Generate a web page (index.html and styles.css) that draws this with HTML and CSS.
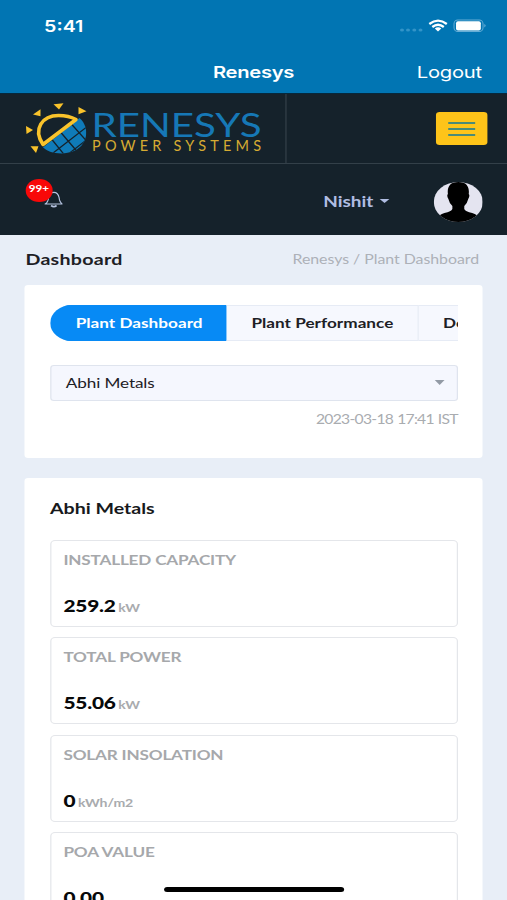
FILE: index.html
```html
<!DOCTYPE html>
<html lang="en">
<head>
<meta charset="utf-8">
<meta name="viewport" content="width=device-width, initial-scale=1">
<title>Renesys</title>
<link rel="stylesheet" href="styles.css">
</head>
<body>
<div class="screen">
  <header class="app-bar">
    <div class="status">
      <span class="clock">5:41</span>
      <svg class="status-icons" viewBox="398 16 90 20" preserveAspectRatio="none">
        <g fill="#3394c8"><ellipse cx="402" cy="30" rx="2" ry="1.6"/><ellipse cx="408" cy="30" rx="2" ry="1.6"/><ellipse cx="414.3" cy="30" rx="2" ry="1.6"/><ellipse cx="420.5" cy="30" rx="2" ry="1.6"/></g>
        <g fill="none" stroke="#fff" stroke-width="2.3"><path d="M429.3 24Q438 17.2 446.800 24"/><path d="M432.300 27Q438 22.400 443.800 27"/></g>
        <path fill="#fff" d="M434.800 28.500Q438 26 441.300 28.500L438 31.500Z"/>
        <rect x="454" y="20" width="29" height="11.500" rx="3.800" fill="none" stroke="#67aed6"/>
        <rect x="456" y="21.200" width="24.800" height="9.200" rx="2" fill="#fff"/>
        <path d="M484.300 24Q487 25.700 484.300 27.500Z" fill="#67aed6"/>
      </svg>
    </div>
    <div class="nav"><span></span><span class="nav-title">Renesys</span><span class="logout">Logout</span></div>
  </header>

  <div class="brand-row">
    <div class="brand">
      <svg class="logo" viewBox="24 100 240 56" preserveAspectRatio="none">
        <g fill="#f9c32b">
          <path d="M53 104.300L63 103.300L58.500 109.500Z"/><path d="M32.500 114.500L40 109.300V116.300Z"/><path d="M78 107L86 111.300L78 114.300Z"/><path d="M25.500 126L32.500 130L26 134Z"/><path d="M30 146.300H38L35.500 153Z"/>
        </g>
        <clipPath id="globe"><path d="M42.500 147.500L79 118C91 128 88 153 61 153.500C52 153.500 46 150.500 42.500 147.500Z"/></clipPath>
        <g clip-path="url(#globe)">
          <rect x="40" y="115" width="50" height="40" fill="#0f7bb9"/>
          <path d="M50 155L90 124M64 157L91 136M60 132L77 152M70 123L87 142M51 139L64 155" fill="none" stroke="#15222b" stroke-width="1.300"/>
        </g>
        <path d="M42.500 144.500C32 129 42 115.500 58 115.500C65 115.500 71 117 75.500 119.500Z" fill="none" stroke="#f9c32b" stroke-width="3.600" stroke-linejoin="round"/>
        <text class="logo-name" x="91" y="137.300" textLength="170" lengthAdjust="spacingAndGlyphs">RENESYS</text>
        <text class="logo-sub" x="91.500" y="150.800" textLength="169" lengthAdjust="spacing">POWER SYSTEMS</text>
      </svg>
    </div>
    <button class="menu" aria-label="Menu"><i></i><i></i><i></i></button>
  </div>

  <div class="user-row">
    <div class="bell-wrap">
      <svg class="bell" viewBox="44 190 19 18" preserveAspectRatio="none" fill="none" stroke="#b5c3e0" stroke-width="1.200">
        <path d="M45 204Q48 202.500 48.500 197.500Q49.500 192.300 53.800 192.300Q58 192.300 59 197.500Q59.500 202.500 62.500 204Z" stroke-linejoin="round"/><path d="M51 205.500Q53.800 207.800 56.500 205.500" stroke-width="1.800"/>
      </svg>
      <span class="badge">99+</span>
    </div>
    <span class="user">Nishit</span><i class="caret"></i>
    <svg class="avatar" viewBox="433 182 50 40" preserveAspectRatio="none">
      <clipPath id="face"><ellipse cx="458" cy="202" rx="24.700" ry="20"/></clipPath>
      <g clip-path="url(#face)"><rect x="433" y="182" width="50" height="40" fill="#e4e4f0"/>
      <path d="M458 182C450 181.500 446.500 187 447.500 194Q446 195.500 448 199Q449 203.500 452 206V209Q451 211.500 444 213Q438.500 214.500 436 219V223H480V219Q477.500 214.500 472 213Q465 211.500 464 209V206Q467 203.500 468 199Q470 195.500 468.500 194C469.500 187 466 181.500 458 182Z"/></g>
    </svg>
  </div>

  <main>
    <div class="page-head"><h1>Dashboard</h1><span class="crumbs">Renesys / Plant Dashboard</span></div>

    <section class="card filter">
      <nav class="tabs"><a class="tab active">Plant Dashboard</a><a class="tab performance">Plant Performance</a><a class="tab">Devices</a></nav>
      <div class="select"><span>Abhi Metals</span><i class="arrow"></i></div>
      <div class="time">2023-03-18 17:41 IST</div>
    </section>

    <section class="card plant">
      <h2>Abhi Metals</h2>
      <div class="metrics">
        <article class="metric"><h3>INSTALLED CAPACITY</h3><p><b>259.2</b><span>kW</span></p></article>
        <article class="metric"><h3>TOTAL POWER</h3><p><b>55.06</b><span>kW</span></p></article>
        <article class="metric"><h3>SOLAR INSOLATION</h3><p><b class="zero">0</b><span>kWh/m2</span></p></article>
        <article class="metric"><h3>POA VALUE</h3><p><b>0.00</b></p></article>
      </div>
    </section>
  </main>
  <div class="home-indicator"></div>
</div>
</body>
</html>
```
FILE: styles.css
```css
* { box-sizing: border-box; }
html, body { margin: 0; width: 507px; height: 900px; overflow: hidden; }
h1, h2, h3, p { margin: 0; }

/* 414px wide phone layout, widened to fill the window */
.screen {
  position: relative;
  width: 414px;
  height: 900px;
  overflow: hidden;
  transform: scaleX(1.22464);
  transform-origin: 0 0;
  background: #e8eef7;
  color: #1d2025;
  font-family: Lato, "Liberation Sans", sans-serif;
}

.app-bar { height: 94px; background: #0175b3; border-bottom: 1px solid #06283c; color: #fff; font-family: Inter, sans-serif; }
.status { display: flex; justify-content: space-between; height: 50px; padding: 16px 15.500px 0 36px; }
.clock { font-size: 16px; line-height: 20px; font-weight: 600; }
.status-icons { width: 73.500px; height: 20px; }
.nav { display: grid; grid-template-columns: 1fr auto 1fr; height: 43px; align-items: center; padding: 0 20.500px; }
.nav-title { font-size: 16.500px; font-weight: 600; letter-spacing: -.25px; }
.logout { font-size: 16.500px; letter-spacing: -.2px; text-align: right; }

.brand-row { display: flex; align-items: center; justify-content: space-between; height: 70px; padding-right: 16px; background: #15222b; border-bottom: 1px solid #334049; }
.brand { display: flex; align-items: center; width: 233.500px; height: 100%; padding-left: 19.600px; border-right: 1px solid #334049; }
.logo { width: 196px; height: 56px; margin-top: -1px; }
.logo-name { font-size: 33px; font-weight: 400; fill: #1678b6; }
.logo-sub { font-size: 14.500px; font-weight: 400; fill: #d6ab32; }
.menu { display: flex; flex-direction: column; align-items: center; justify-content: center; gap: 4px; width: 42.500px; height: 33px; border: 0; border-radius: 3px; background: #fec419; padding: 0; }
.menu i { width: 22px; height: 2px; background: #4a8b78; }

.user-row { display: flex; align-items: center; height: 71px; padding: 0 19.600px 1px 20.800px; background: #15222b; color: #b0bde2; }
.bell-wrap { position: relative; flex: 1; height: 71px; padding: 26px 0 0 15px; }
.bell { width: 15.500px; height: 18px; }
.badge { position: absolute; left: 0; top: 15.500px; width: 22px; height: 22.500px; border-radius: 50%; background: #f80808; color: #fff; font: 700 9.500px/20px Lato, sans-serif; text-align: center; }
.user { margin-top: 3px; font-size: 15.500px; font-weight: 700; line-height: 20px; }
.caret { width: 0; border: 4px solid transparent; border-top-color: #b0bde2; border-bottom: 0; margin: 4px 36px 0 5px; }
.avatar { width: 40.500px; height: 40px; margin-top: 5px; }

main { padding: 0 19.800px 0 20.400px; }
.page-head { display: flex; align-items: center; justify-content: space-between; height: 50px; padding: 0 3px 2px 0; }
h1 { margin-top: -1px; padding-left: .4px; font-size: 16px; font-weight: 700; letter-spacing: .22px; }
.crumbs { font-size: 13px; color: #adb1b8; letter-spacing: -.04px; }

.card { background: #fff; border-radius: 3px; padding: 20px 20.400px; }
.filter { height: 173px; margin-bottom: 19.500px; }
.tabs { display: flex; height: 36px; overflow: hidden; font-size: 14px; font-weight: 700; white-space: nowrap; border-radius: 18px 0 0 18px; }
.tab { flex: none; padding: 0 20px; line-height: 33px; border: 1px solid #e6ebf5; border-left: 0; background: #f6f8fe; letter-spacing: .02px; }
.tab.active { width: 144.500px; padding: 0 0 0 21px; background: #078af5; border-color: #078af5; color: #fff; }
.performance { width: 156.500px; padding-right: 0; }
.select { display: flex; align-items: center; justify-content: space-between; height: 36px; margin-top: 24px; padding: 0 10px 1px 12px; background: #f5f7fe; border: 1px solid #dfe4ee; border-radius: 3px; font-size: 14px; letter-spacing: -.1px; }
.arrow { border: 4px solid transparent; border-top: 5px solid #929aa5; border-bottom: 0; }
.time { margin-top: 10px; font-size: 12.800px; line-height: 16px; letter-spacing: -.58px; word-spacing: .5px; text-align: right; color: #a9acb0; }

.plant { height: 440px; }
h2 { margin-top: -1px; font-size: 16px; line-height: 22px; font-weight: 700; color: #17191c; }
.metrics { display: grid; gap: 10.400px; margin-top: 21.500px; }
.metric { height: 87px; padding: 10px 10px 0; border: 1px solid #e4e6ea; border-radius: 4px; }
h3 { font-size: 14px; line-height: 18px; font-weight: 700; letter-spacing: -.15px; color: #a6a8ab; }
.metric p { display: flex; align-items: baseline; gap: 2px; margin-top: 26px; line-height: 22px; }
.metric b { font-size: 17px; font-weight: 900; letter-spacing: -.15px; color: #08090a; }
.metric .zero { letter-spacing: 0; }
.metric span { font-size: 11.500px; font-weight: 700; letter-spacing: -.1px; color: #a9abae; }

.home-indicator { position: absolute; left: 133.500px; top: 887px; width: 147.500px; height: 5px; border-radius: 3px; background: #000; }
```
